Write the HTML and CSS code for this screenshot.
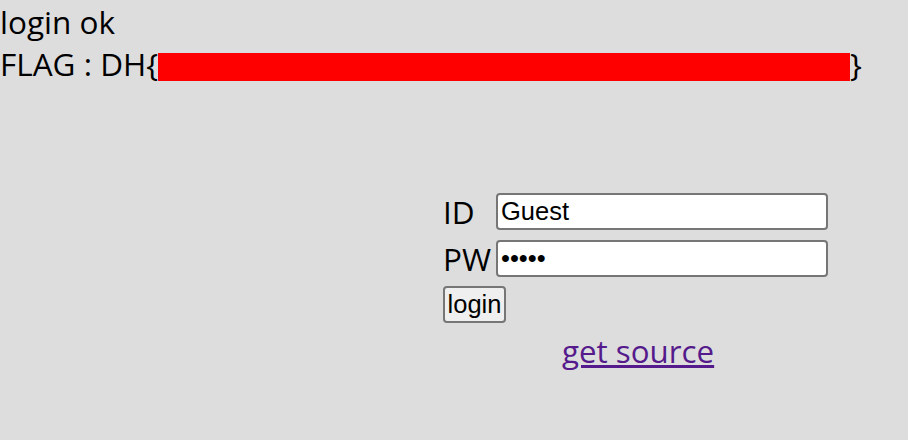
FILE: index.html
```html
<!DOCTYPE html>
<html>
<head>
<meta charset="utf-8">
<link rel="stylesheet" href="styles.css">
</head>
<body>
<div class="msg">login ok</div>
<div class="msg">FLAG : DH{<span class="redact"></span>}</div>
<div class="form-wrap">
  <form class="login">
    <div class="row"><span class="label">ID</span><input class="field" type="text" value="Guest"></div>
    <div class="row"><span class="label">PW</span><input class="field" type="password" value="guest"></div>
    <div class="row"><button class="btn" type="button">login</button></div>
  </form>
  <a class="src" href="#">get source</a>
</div>
</body>
</html>
```
FILE: styles.css
```css
html, body {
  margin: 0;
  padding: 0;
  background: #dddddd;
}
body {
  font-family: "Open Sans", sans-serif;
  font-size: 31.5px;
  color: #000;
  padding-top: 1px;
}
.msg {
  line-height: 42px;
  white-space: nowrap;
}
.redact {
  display: inline-block;
  width: 692px;
  height: 28px;
  background: #ff0000;
  vertical-align: -5px;
}
.form-wrap {
  padding-left: 443px;
  padding-top: 108px;
}
.login {
  display: flex;
  flex-direction: column;
  gap: 10px;
  margin: 0;
}
.row {
  display: flex;
  align-items: center;
  height: 37px;
}
.label {
  width: 53px;
  line-height: 37px;
}
.field {
  box-sizing: border-box;
  width: 332px;
  height: 37px;
  border: 2px solid #767676;
  border-radius: 4px;
  background: #fff;
  font-family: "Liberation Sans", Arial, sans-serif;
  font-size: 25.5px;
  padding: 0 3px;
  margin: 0;
  color: #000;
}
.btn {
  box-sizing: border-box;
  height: 37px;
  width: 63px;
  border: 2px solid #767676;
  border-radius: 4px;
  background: #efefef;
  font-family: "Liberation Sans", Arial, sans-serif;
  font-size: 25.5px;
  padding: 0;
  color: #000;
  margin-top: -2px;
}
.src {
  display: block;
  margin-left: 119px;
  margin-top: 6px;
  color: #551a8b;
  font-size: 31.3px;
  width: max-content;
}
```
